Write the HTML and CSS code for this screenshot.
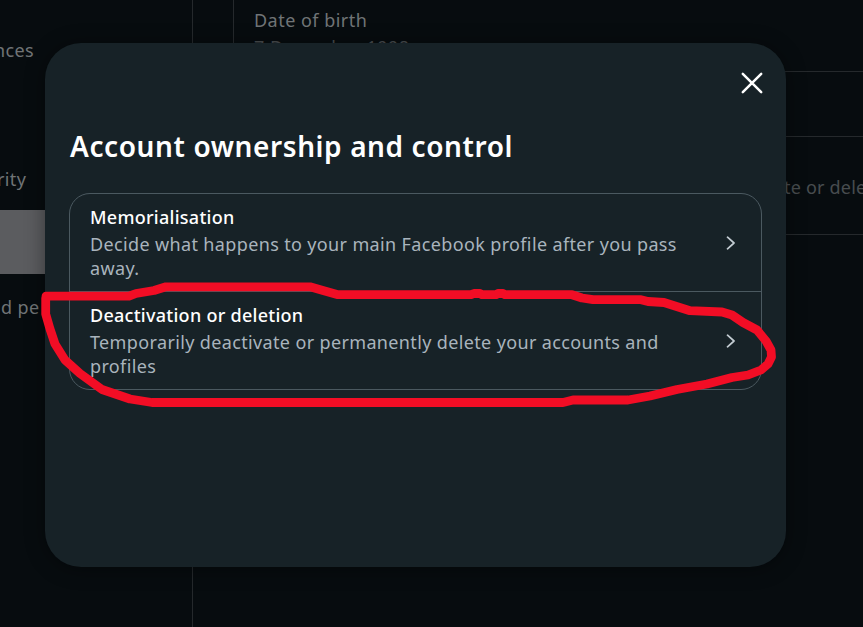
FILE: index.html
```html
<!DOCTYPE html>
<html lang="en">
<head>
    <meta charset="UTF-8">
    <meta name="viewport" content="width=device-width, initial-scale=1.0">
    <title>Account ownership and control</title>
    <link rel="stylesheet" href="styles.css">
</head>
<body>
    <div class="page">
        <nav class="sidebar">
            <a class="nav-item nav-first">nces</a>
            <a class="nav-item"></a>
            <a class="nav-item nav-third">rity</a>
            <a class="nav-item active"></a>
            <a class="nav-item nav-last">d pe</a>
        </nav>
        <main class="content">
            <section class="card">
                <div class="card-row birth">
                    <p>Date of birth</p>
                    <p class="value">7 December 1998</p>
                </div>
                <div class="card-row identity"></div>
                <div class="card-row ownership">te or dele</div>
            </section>
        </main>
    </div>

    <div class="overlay">
        <div class="modal" role="dialog">
            <button class="close" aria-label="Close">
                <svg width="22" height="22" viewBox="0 0 22 22"><path d="M1.8 1.8 20.2 20.2M20.2 1.8 1.8 20.2"/></svg>
            </button>
            <h1>Account ownership and control</h1>
            <div class="options">
                <div class="option">
                    <div class="option-text">
                        <h2>Memorialisation</h2>
                        <p>Decide what happens to your main Facebook profile after you pass<br>away.</p>
                    </div>
                    <svg class="chevron" width="10" height="14" viewBox="0 0 10 14"><path d="M1.5 1.2 8 7 1.5 12.8"/></svg>
                </div>
                <div class="option">
                    <div class="option-text">
                        <h2>Deactivation or deletion</h2>
                        <p>Temporarily deactivate or permanently delete your accounts and<br>profiles</p>
                    </div>
                    <svg class="chevron" width="10" height="14" viewBox="0 0 10 14"><path d="M1.5 1.2 8 7 1.5 12.8"/></svg>
                </div>
            </div>
        </div>
    </div>

    <!-- hand-drawn marker around the second option -->
    <svg class="marker" width="863" height="627" viewBox="0 0 863 627">
        <path d="M46 296.2H129L136 293.5 145 292 154 290.5 166 286.8H310L323 290.5 338 294.7H471L474 293.5H480L482 294.7H496L498 293.5H503L505 294.7H572L582 298 593 299.7H641L648 301.5 664 302.5 690 310.7 722 312 732 315 743 322.5 757 330 766 341 771 350 771.5 357 768 364 761 370 748 375 732 377.5 707 384 677 389.5 650 396 628 400H573L563 402.5H152L130 399 102 389.5 80 373.5 65 360 55 344 50 329 45.7 314V298"/>
    </svg>
</body>
</html>
```

FILE: styles.css
```css
*{
    box-sizing: border-box;
}
body{
    margin: 0;
    height: 627px;
    overflow: hidden;
    background: #070c0f;
    color: #707476;
    font-family: "Noto Sans", sans-serif;
    font-size: 18px;
    line-height: 24px;
    letter-spacing: 0.36px;
}
h1, h2, p{
    margin: 0;
}
.page{
    display: flex;
    height: 627px;
}
.sidebar{
    width: 193px;
    padding-top: 17px;
    border-right: 1px solid #25292c;
    flex: none;
}
.nav-item{
    display: flex;
    align-items: center;
    height: 64.3px;
    padding-top: 2px;
    white-space: nowrap;
}
.nav-item.active{
    width: 176px;
    background: #5b5c5f;
}
.nav-first{
    margin-left: -6px;
}
.nav-third{
    margin-left: -3px;
}
.nav-last{
    padding-left: 1px;
}
.content{
    flex: 1;
    min-width: 0;
    padding-left: 40px;
    overflow: hidden;
}
.card{
    width: 660px;
    height: 235px;
    border-left: 1px solid #25292c;
}
.card-row{
    border-bottom: 1px solid #25292c;
}
.birth{
    height: 72px;
    padding: 8px 0 0 20px;
    letter-spacing: 0.48px;
}
.birth .value{
    margin-top: 3px;
    color: #484c4f;
}
.identity{
    height: 65px;
}
.ownership{
    height: 98px;
    padding: 38px 0 0 550px;
    color: #484c4f;
    letter-spacing: 0.2px;
    white-space: nowrap;
}
.overlay{
    position: absolute;
    top: 0;
    left: 0;
    width: 863px;
    height: 627px;
    padding: 43px 0 0 45px;
}
.modal{
    display: flex;
    flex-direction: column;
    width: 741px;
    height: 524px;
    padding: 29px 24px 0;
    border-radius: 36px;
    background: #172227;
    box-shadow: 0 2px 20px rgba(0, 0, 0, 0.4);
}
.close{
    align-self: flex-end;
    width: 22px;
    height: 22px;
    margin-right: -1px;
    padding: 0;
    border: 0;
    background: none;
}
.close svg{
    display: block;
    fill: none;
    stroke: #fff;
    stroke-width: 2.5;
    stroke-linecap: round;
}
h1{
    margin-top: 33px;
    padding-left: 1px;
    color: #fff;
    font-size: 28px;
    font-weight: 600;
    line-height: 38px;
    letter-spacing: 0.6px;
    white-space: nowrap;
}
.options{
    margin-top: 28px;
    border: 1px solid #4b5960;
    border-radius: 21px;
}
.option{
    display: flex;
    align-items: center;
    justify-content: space-between;
    height: 97px;
    padding: 0 25px 0 20px;
    white-space: nowrap;
}
.option + .option{
    height: 98px;
    border-top: 1px solid #4b5960;
}
.option h2{
    margin-bottom: 3px;
    color: #fff;
    font-size: 18px;
    font-weight: 500;
    line-height: 24px;
    letter-spacing: 0.27px;
}
.option p{
    color: #a9b4bd;
}
.chevron, .marker{
    fill: none;
}
.chevron{
    stroke: #c3ccd2;
    stroke-width: 1.7;
    stroke-linecap: round;
    stroke-linejoin: round;
}
.marker{
    position: absolute;
    top: 0;
    left: 0;
    pointer-events: none;
    stroke: #f20d25;
    stroke-width: 8.8;
    stroke-linejoin: round;
    stroke-linecap: round;
}
```
